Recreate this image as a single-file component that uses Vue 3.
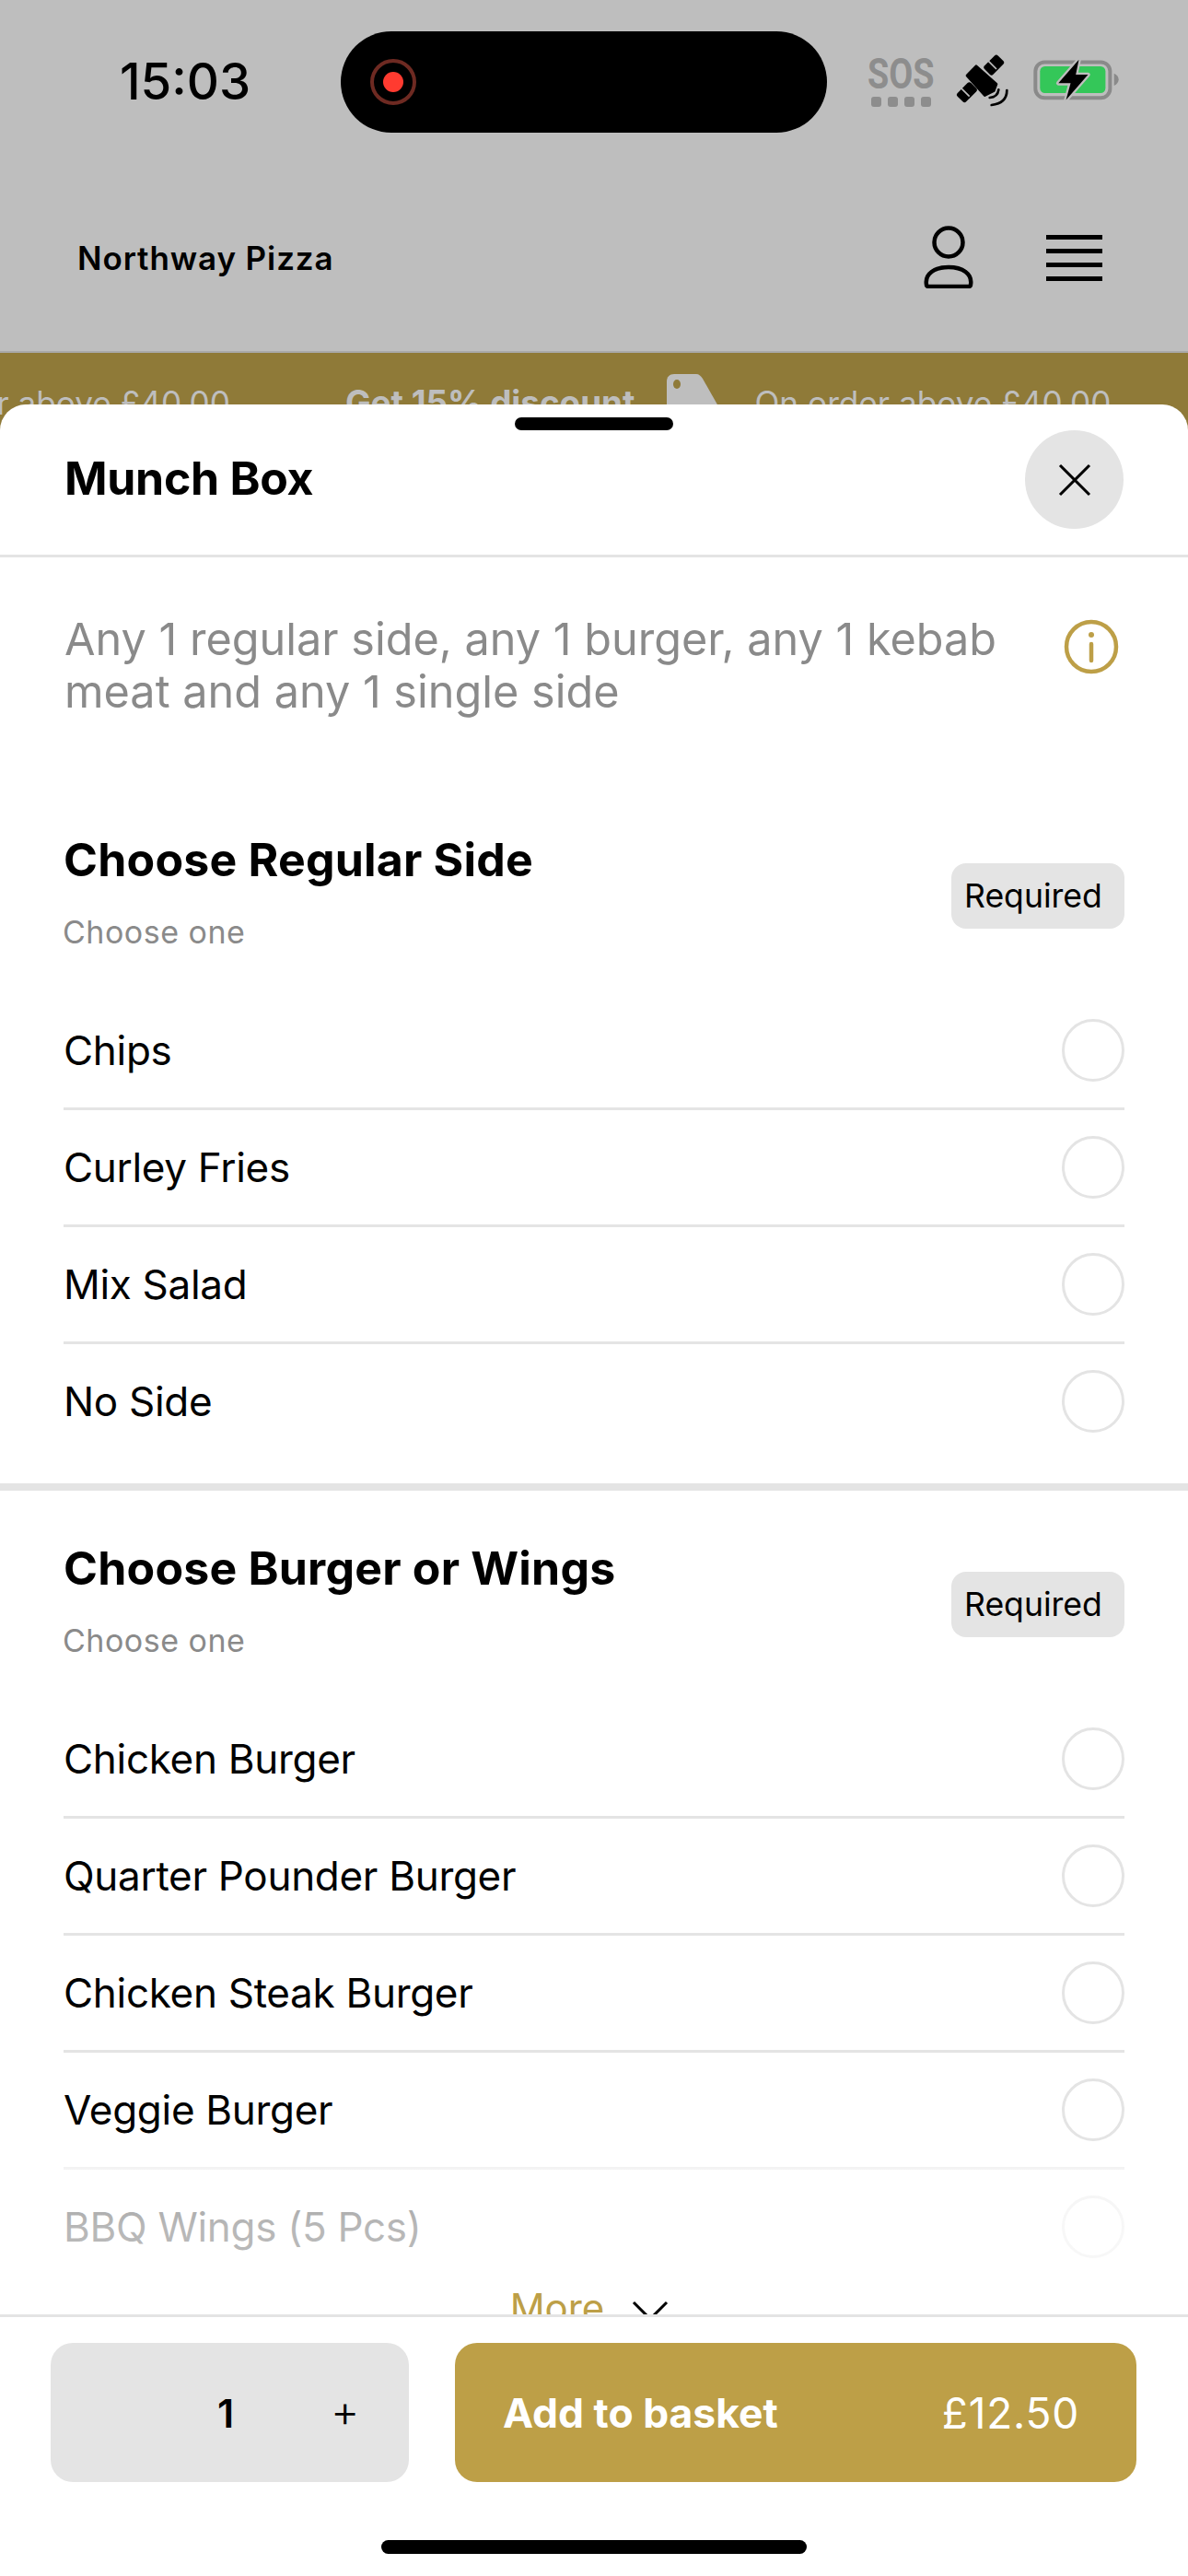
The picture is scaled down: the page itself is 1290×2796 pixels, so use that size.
<script setup>
// Item customise sheet over the dimmed restaurant page.
const sections = [
  {
    title: "Choose Regular Side",
    options: ["Chips", "Curley Fries", "Mix Salad", "No Side"],
  },
  {
    title: "Choose Burger or Wings",
    options: [
      "Chicken Burger",
      "Quarter Pounder Burger",
      "Chicken Steak Burger",
      "Veggie Burger",
      "BBQ Wings (5 Pcs)",
    ],
    more: true,
  },
];
</script>

<template>
  <div class="page">
    <div class="top">
      <div class="status">
        <span class="time">15:03</span>
        <div class="island">
          <span class="rec"><i /></span>
        </div>
        <div class="sos">
          <span class="sos-text">SOS</span>
          <span class="sos-dots"><i /><i /><i /><i /></span>
        </div>
        <svg class="sat" viewBox="450 105 210 195">
          <g fill="#000">
            <polygon points="540,155 606,214 598,236 568,251 510,186" stroke="#000" stroke-width="8" stroke-linejoin="round" />
            <rect x="566" y="132" width="62" height="40" rx="8" transform="rotate(-45 597 151)" />
            <rect x="478" y="221" width="62" height="40" rx="8" transform="rotate(-45 509 240)" />
          </g>
          <path d="M578 137 L606 165 M490 226 L518 254" stroke="#bebebe" stroke-width="5" />
          <path d="M584 258 Q610 256 613 232 M590 282 Q640 276 640 234" fill="none" stroke="#000" stroke-width="8" stroke-linecap="round" />
        </svg>
        <svg class="batt" viewBox="720 125 295 150">
          <rect x="733" y="141" width="244" height="117" rx="30" fill="none" stroke="#8a8a8a" stroke-width="12" />
          <rect x="748" y="155" width="214" height="87" rx="16" fill="#34c759" />
          <path d="M990 178 C1000 182 1005 190 1005 198 C1005 206 1000 214 990 218 Z" fill="#8a8a8a" />
          <polygon points="875,133 808,210 848,210 833,265 905,182 865,182" fill="#000" stroke="#bebebe" stroke-width="14" stroke-linejoin="round" paint-order="stroke" />
        </svg>
      </div>
      <div class="brand-row">
        <span class="brand">Northway Pizza</span>
        <div class="brand-icons">
          <svg class="user" viewBox="0 0 54 68" fill="none" stroke="#000" stroke-width="4.5">
            <circle cx="27" cy="18" r="15.5" />
            <path d="M3 64 C1 52 12 45 27 45 C42 45 53 52 51 64 C51 65 50 66 48 66 H6 C4 66 3 65 3 64 Z" />
          </svg>
          <div class="burger"><i /><i /><i /><i /></div>
        </div>
      </div>
    </div>

    <div class="banner">
      <div class="ticker">
        <span class="deal">On order above £40.00</span>
        <b class="deal-b">Get 15% discount</b>
        <svg class="tag" viewBox="0 0 60 60">
          <path d="M8 0 H32 C35 0 37 2 39 5 L60 42 V60 H0 V8 C0 3 3 0 8 0 Z" fill="#bebebe" />
          <ellipse cx="11" cy="11" rx="4" ry="5" fill="#8f7a38" />
        </svg>
        <span class="deal">On order above £40.00</span>
      </div>
    </div>

    <div class="sheet">
      <div class="grabber" />
      <header class="sheet-head">
        <h1>Munch Box</h1>
        <button class="close">
          <svg viewBox="0 0 36 36" fill="none" stroke="#000" stroke-width="3">
            <path d="M2 2 L34 34 M34 2 L2 34" />
          </svg>
        </button>
      </header>

      <div class="body">
        <div class="desc">
          <p>Any 1 regular side, any 1 burger, any 1 kebab meat and any 1 single side</p>
          <svg class="info" viewBox="0 0 60 60" fill="none" stroke="#bd9f47" stroke-width="4.5">
            <circle cx="30" cy="30" r="27" />
            <path d="M30 27 V45" stroke-linecap="round" />
            <circle cx="30" cy="17" r="3" fill="#bd9f47" stroke="none" />
          </svg>
        </div>

        <section v-for="s in sections" :key="s.title" class="group">
          <div class="group-head">
            <div>
              <h2>{{ s.title }}</h2>
              <p class="hint">Choose one</p>
            </div>
            <span class="pill">Required</span>
          </div>
          <div class="rows">
            <div v-for="o in s.options" :key="o" class="row">
              <span>{{ o }}</span>
              <i class="radio" />
            </div>
            <span v-if="s.more" class="fade" />
          </div>
          <div v-if="s.more" class="more">
            <span>More</span>
            <svg viewBox="0 0 40 22" fill="none" stroke="#000" stroke-width="3"><path d="M2 2 L20 20 L38 2" /></svg>
          </div>
        </section>
      </div>

      <footer class="foot">
        <div class="actions">
          <div class="qty">
            <b>1</b>
            <span class="plus">+</span>
          </div>
          <button class="add">
            <b>Add to basket</b>
            <span>£12.50</span>
          </button>
        </div>
        <div class="home" />
      </footer>
    </div>
  </div>
</template>

<style>
html,
body {
  margin: 0;
  background: #fff;
}
</style>

<style scoped>
.page {
  position: relative;
  width: 1290px;
  height: 2796px;
  overflow: hidden;
  font-family: Inter, "Liberation Sans", sans-serif;
  color: #000;
  background: #bebebe;
}
.top {
  height: 381px;
  border-bottom: 2px solid #a9a9a9;
}
.status {
  height: 178px;
  display: flex;
  align-items: flex-start;
}
.time {
  margin: 60px 0 0 130px;
  width: 240px;
  font-size: 54.5px;
  line-height: 56px;
  font-weight: 500;
}
.island {
  width: 528px;
  height: 110px;
  margin-top: 34px;
  border-radius: 55px;
  background: #000;
  display: flex;
  align-items: center;
  padding-left: 32px;
  box-sizing: border-box;
}
.rec {
  width: 50px;
  height: 50px;
  border: 4px solid #6e2a22;
  border-radius: 50%;
  box-sizing: border-box;
  display: grid;
  place-items: center;
}
.rec i {
  width: 22px;
  height: 22px;
  border-radius: 50%;
  background: #ff3b30;
}
.sos {
  margin: 63px 0 0 45px;
  width: 70px;
  display: flex;
  flex-direction: column;
  align-items: center;
}
.sos-text {
  font-family: Roboto, sans-serif;
  font-weight: 700;
  font-size: 46px;
  line-height: 34px;
  color: #8d8d8d;
  transform: scaleX(0.82);
}
.sos-dots {
  display: flex;
  gap: 7px;
  margin-top: 8px;
}
.sos-dots i {
  width: 11px;
  height: 11px;
  border-radius: 3px;
  background: #8d8d8d;
}
.sat {
  width: 70px;
  height: 65px;
  margin: 55px 0 0 17px;
}
.batt {
  width: 98px;
  height: 50px;
  margin: 62px 0 0 20px;
}
.brand-row {
  display: flex;
  align-items: center;
  justify-content: space-between;
  padding: 69px 93px 0 84px;
}
.brand {
  font-size: 35px;
  line-height: 40px;
  font-weight: 600;
  letter-spacing: 0.9px;
}
.brand-icons {
  display: flex;
  align-items: center;
  gap: 79px;
}
.user {
  width: 54px;
  height: 68px;
  margin-top: -2px;
}
.burger {
  width: 61px;
  display: flex;
  flex-direction: column;
  gap: 10px;
}
.burger i {
  height: 5px;
  background: #000;
}
.banner {
  height: 100px;
  background: #8f7a38;
  overflow: hidden;
}
.ticker {
  display: flex;
  align-items: flex-start;
  white-space: nowrap;
  margin-left: -137px;
  padding-top: 32px;
  color: #bebebe;
  font-size: 35.2px;
  line-height: 44px;
}
.deal-b {
  margin-left: 125px;
  font-size: 36.8px;
  font-weight: 700;
}
.tag {
  width: 60px;
  height: 60px;
  margin: -9px 35px 0 35px;
}
.sheet {
  position: absolute;
  left: 0;
  right: 0;
  top: 439px;
  bottom: 0;
  background: #fff;
  border-radius: 28px 28px 0 0;
  display: flex;
  flex-direction: column;
  overflow: hidden;
}
.grabber {
  position: absolute;
  top: 14px;
  left: 559px;
  width: 172px;
  height: 14px;
  border-radius: 7px;
  background: #000;
}
.sheet-head {
  height: 166px;
  flex: none;
  display: flex;
  align-items: center;
  justify-content: space-between;
  padding: 0 70px;
  border-bottom: 3px solid #e4e4e4;
  box-sizing: border-box;
}
h1 {
  margin: 0 0 3px;
  font-size: 50px;
  font-weight: 700;
  letter-spacing: -0.3px;
}
.close {
  width: 107px;
  height: 107px;
  border: 0;
  padding: 0;
  border-radius: 50%;
  background: #e4e4e4;
  display: grid;
  place-items: center;
}
.close svg {
  width: 36px;
  height: 36px;
}
.body {
  flex: 1;
  min-height: 0;
  overflow: hidden;
}
.desc {
  display: flex;
  justify-content: space-between;
  align-items: flex-start;
  padding: 60px 75px 0 70px;
}
.desc p {
  margin: 0;
  width: 1030px;
  font-size: 48.6px;
  line-height: 57px;
  color: #8a8a8a;
}
.info {
  width: 60px;
  height: 60px;
  margin-top: 7px;
}
.group {
  padding: 0 69px 27px;
}
.desc + .group {
  padding-top: 124px;
}
.group + .group {
  border-top: 8px solid #e4e4e4;
  padding-top: 54px;
}
.group-head {
  display: flex;
  justify-content: space-between;
  align-items: center;
  margin-bottom: 44px;
}
h2 {
  margin: 0;
  font-size: 50px;
  line-height: 60px;
  font-weight: 700;
  letter-spacing: 0.2px;
}
.hint {
  margin: 27px 0 0 -1px;
  font-size: 34px;
  line-height: 44px;
  color: #8a8a8a;
  letter-spacing: 0.5px;
}
.pill {
  margin-top: 8px;
  width: 188px;
  height: 71px;
  box-sizing: border-box;
  padding-left: 14px;
  border-radius: 16px;
  background: #e4e4e4;
  font-size: 35.6px;
  line-height: 71px;
}
.rows {
  position: relative;
}
.row {
  height: 124px;
  display: flex;
  align-items: center;
  justify-content: space-between;
  font-size: 44px;
  letter-spacing: -0.3px;
  border-bottom: 3px solid #e4e4e4;
}
.row:last-of-type {
  border-bottom: 0;
}
.radio {
  width: 68px;
  height: 68px;
  border: 3px solid #e4e4e4;
  border-radius: 50%;
  box-sizing: border-box;
}
.fade {
  position: absolute;
  left: 0;
  right: 0;
  bottom: 0;
  height: 154px;
  background: linear-gradient(rgba(255, 255, 255, 0), rgba(255, 255, 255, 0.6) 20%, rgba(255, 255, 255, 0.72) 60%);
}
.more {
  display: flex;
  justify-content: center;
  align-items: flex-start;
  gap: 30px;
  margin-top: -1px;
  padding-right: 10px;
  color: #bd9f47;
  font-size: 42px;
  line-height: 54px;
}
.more svg {
  width: 40px;
  height: 22px;
  margin-top: 19px;
}
.foot {
  flex: none;
  height: 284px;
  border-top: 3px solid #e4e4e4;
  box-sizing: border-box;
  background: #fff;
  display: flex;
  flex-direction: column;
  align-items: center;
}
.actions {
  align-self: stretch;
  display: flex;
  gap: 50px;
  padding: 28px 56px 0 55px;
}
.qty {
  width: 389px;
  height: 151px;
  border-radius: 24px;
  background: #e4e4e4;
  display: flex;
  align-items: center;
}
.qty b {
  margin-left: 180px;
  width: 20px;
  text-align: center;
  font-size: 43px;
  font-weight: 600;
}
.plus {
  margin: -4px 0 0 104px;
  font-size: 48px;
  line-height: 1;
  font-weight: 300;
}
.add {
  flex: 1;
  height: 151px;
  border: 0;
  border-radius: 24px;
  background: #bd9f47;
  color: #fff;
  font-family: inherit;
  font-size: 46px;
  letter-spacing: 0.8px;
  display: flex;
  align-items: center;
  justify-content: space-between;
  padding: 0 62px 0 52px;
}
.add b {
  font-size: 44.4px;
  letter-spacing: 0;
  font-weight: 700;
}
.home {
  width: 462px;
  height: 15px;
  border-radius: 8px;
  background: #000;
  margin-top: 63px;
}
</style>
